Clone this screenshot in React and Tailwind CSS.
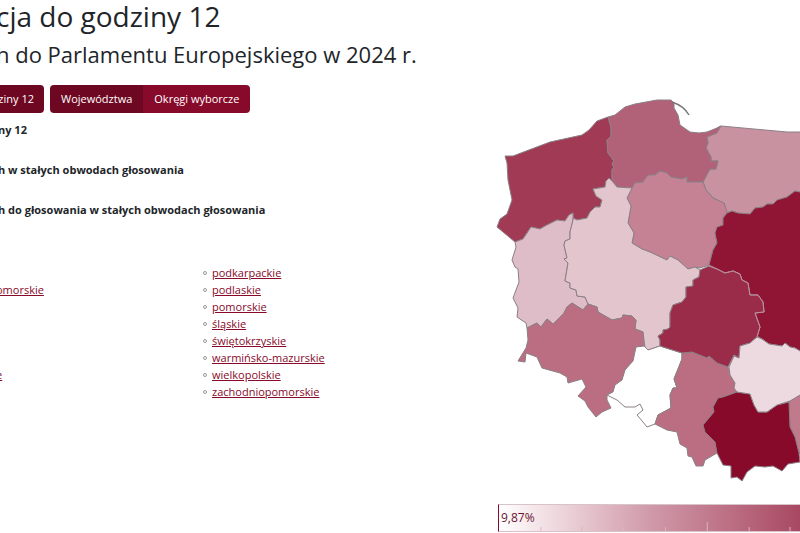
/**
 * @file App.jsx
 * @description Turnout page with the list of voivodeships and the turnout map.
 */

import React, { useState } from "react";

// outlines of the voivodeships, in map units
const REGIONS = [
  {
    name: "zachodniopomorskie",
    fill: "#a03a55",
    points:
      "505,156 513,156 550,142 582,135 589,130 597,121 608,117 611,127 611,136 607,140 608,153 614,161 612,164 614,167 612,170 612,181 609,178 606,181 605,187 593,189 596,196 602,200 600,207 595,207 590,212 587,218 577,220 573,218 573,213 569,215 565,221 557,220 545,226 540,229 531,227 523,239 515,242 497,227 500,219 507,214 512,200 508,180 507,163",
  },
  {
    name: "warmińsko-mazurskie",
    fill: "#c892a1",
    points:
      "721,126 787,132 810,132 810,189 800,192 795,191 787,197 777,200 773,204 767,204 763,207 755,208 750,214 738,213 732,211 727,213 724,203 713,198 706,190 703,182 710,169 716,169 718,161 711,161 711,157 706,148 708,143 707,137 711,134 717,128",
  },
  {
    name: "pomorskie",
    fill: "#b26278",
    points:
      "608,117 615,115 625,107 635,104 657,100 671,100 674,103 674,108 678,115 680,125 690,132 699,133 707,132 717,128 721,126 717,133 707,137 708,143 706,148 711,157 711,161 718,161 716,169 710,169 703,182 687,182 687,177 682,179 671,177 667,173 660,171 655,175 648,175 643,182 635,183 632,188 617,187 612,181 612,170 614,167 612,164 614,161 608,153 607,140 611,136 611,127",
  },
  {
    name: "kujawsko-pomorskie",
    fill: "#c48294",
    points:
      "632,188 635,183 643,182 648,175 655,175 660,171 667,173 671,177 682,179 687,177 687,182 703,182 706,190 713,198 724,203 727,212 723,218 723,225 717,227 715,233 717,243 713,250 709,265 700,268 695,267 688,269 678,260 670,256 667,260 650,252 642,249 632,243 634,233 628,223 631,206 627,198",
  },
  {
    name: "lubuskie",
    fill: "#dfbdc8",
    points:
      "515,242 523,239 531,227 540,229 545,226 557,220 565,221 569,215 573,213 573,220 570,232 570,239 565,241 564,245 567,258 564,259 568,263 565,281 570,283 570,288 576,290 577,296 585,297 588,304 583,310 572,303 567,307 564,313 553,324 547,319 541,327 537,323 527,328 526,323 517,317 518,308 513,298 519,282 518,269 515,267 512,260 516,247",
  },
  {
    name: "wielkopolskie",
    fill: "#e3c5cd",
    points:
      "573,218 577,220 587,218 590,212 595,207 600,207 602,200 596,196 593,189 605,187 606,181 609,178 612,181 617,187 632,188 627,198 631,206 628,223 634,233 632,243 642,249 650,252 667,260 670,256 678,260 688,269 695,267 700,270 699,277 693,280 693,286 686,287 686,297 682,302 673,305 670,313 670,327 668,329 663,330 663,333 658,336 660,340 660,346 648,350 645,348 643,332 635,329 636,320 632,316 623,315 622,318 612,320 598,312 597,307 588,304 585,297 577,296 576,290 570,288 570,283 565,281 568,263 564,259 567,258 564,245 565,241 570,239 570,232 573,220",
  },
  {
    name: "dolnośląskie",
    fill: "#bb6e82",
    points:
      "527,328 537,323 541,327 547,319 553,324 564,313 567,307 572,303 583,310 588,304 597,307 598,312 612,320 622,318 623,315 632,316 636,320 635,329 643,332 644,346 636,347 633,361 625,370 622,380 615,385 613,392 607,395 607,400 611,408 602,412 596,417 588,407 585,401 578,396 586,387 582,379 568,383 567,377 560,373 542,368 537,357 526,353 525,362 518,361 526,348 528,340",
  },
  {
    name: "opolskie",
    fill: "#ffffff",
    points:
      "644,346 648,350 660,346 682,353 682,359 674,379 677,388 673,388 670,395 671,408 658,415 655,424 647,427 643,422 637,415 643,410 640,404 635,407 625,407 617,400 607,395 613,392 615,385 622,380 625,370 633,361 636,347",
  },
  {
    name: "śląskie",
    fill: "#bb6e82",
    points:
      "682,353 692,352 707,358 709,356 717,363 728,367 730,375 735,383 734,388 737,392 723,397 718,398 713,407 714,412 703,425 705,432 715,442 717,453 705,460 703,466 696,466 692,457 688,456 687,448 680,444 677,432 667,430 655,424 658,415 671,408 670,395 673,388 677,388 674,379 682,359",
  },
  {
    name: "mazowieckie",
    fill: "#901534",
    points:
      "709,265 713,250 717,243 715,233 717,227 723,225 723,218 727,213 732,211 738,213 750,214 755,208 763,207 767,204 773,204 777,200 787,197 795,191 800,192 810,189 810,352 800,351 795,348 790,347 785,343 782,346 769,344 762,339 757,336 760,327 755,313 764,312 763,302 758,295 750,295 748,283 742,280 740,274 733,271 725,273 717,269",
  },
  {
    name: "łódzkie",
    fill: "#9a2c4a",
    points:
      "709,266 717,269 725,273 733,271 740,274 742,280 748,283 750,295 758,295 763,302 764,312 755,313 760,327 757,337 750,343 740,346 739,358 734,355 728,367 717,363 709,356 707,358 692,352 682,353 660,346 660,340 658,336 663,333 663,330 668,329 670,327 670,313 673,305 682,302 686,297 686,287 693,286 693,280 699,277 700,270",
  },
  {
    name: "podkarpackie",
    fill: "#bf7a8c",
    points: "789,401 800,395 810,392 810,462 799,453 795,437 790,427",
  },
  {
    name: "małopolskie",
    fill: "#870a2a",
    points:
      "737,392 750,394 754,405 758,412 767,412 777,405 789,402 790,427 795,437 799,453 800,462 788,464 782,471 773,466 765,467 755,466 747,472 742,481 737,477 731,478 731,466 723,465 717,453 715,442 705,432 703,425 714,412 713,407 718,398 723,397",
  },
  {
    name: "świętokrzyskie",
    fill: "#eddae0",
    points:
      "757,337 762,339 769,344 782,346 785,343 790,347 795,348 800,351 810,352 810,392 800,395 790,401 777,405 767,412 758,412 754,405 750,394 737,392 734,388 735,383 730,375 729,367 734,356 739,358 740,346 750,343",
  },
];

const LINKS = [
  "podkarpackie",
  "podlaskie",
  "pomorskie",
  "śląskie",
  "świętokrzyskie",
  "warmińsko-mazurskie",
  "wielkopolskie",
  "zachodniopomorskie",
];

const TICKS = [42, 83, 125, 167, 209, 251, 292];

/** Turnout map, one polygon for each voivodeship */
function TurnoutMap() {
  return (
    <svg viewBox="496 97 304 387" className="block w-full" role="img" aria-label="Mapa frekwencji">
      <g stroke="#8b7f85" strokeWidth="1" strokeLinejoin="round">
        {REGIONS.map((region) => (
          <polygon key={region.name} points={region.points} fill={region.fill} />
        ))}
      </g>
      {/* lighter line between the two darkest regions */}
      <polyline
        points="709,266 717,269 725,273 733,271 740,274 742,280 748,283 750,295 758,295 763,302 764,312 755,313 760,327 757,337"
        fill="none"
        stroke="#c58b9c"
      />
      {/* Hel peninsula */}
      <path d="M672 102 Q684 106 689 115" fill="none" stroke="#777" strokeWidth="1.4" />
    </svg>
  );
}

/** Colour scale under the map */
function Legend() {
  return (
    <div className="relative ml-0.5 mt-5 flex h-7 items-center border-y border-l border-y-[#d9c3ca] border-l-[#870a2a] bg-linear-to-r from-white via-[#d09aaa] to-[#a84863] pl-0.5 text-xs text-[#6b1530]">
      9,87%
      <svg viewBox="0 0 302 26" className="absolute inset-0 h-full w-full" preserveAspectRatio="none" aria-hidden="true">
        {TICKS.map((x) => (
          <line key={x} x1={x} x2={x} y1={x === 209 ? 17 : 22} y2="26" stroke="#dcb3bf" />
        ))}
      </svg>
    </div>
  );
}

function App() {
  const [view, setView] = useState("woj");

  return (
    <div className="bg-white font-['Open_Sans',sans-serif] text-[#212529]">
      {/* --------------------------- Headings --------------------------- */}
      <header className="-ml-1 whitespace-nowrap">
        <h1 className="text-[28px] leading-8">cja do godziny 12</h1>
        <h2 className="pt-1 text-[22px] leading-9">h do Parlamentu Europejskiego w 2024 r.</h2>
      </header>

      <div className="flex items-start pt-3">
        <main className="min-w-0 flex-1 pt-px">
          {/* --------------------------- Buttons --------------------------- */}
          <div className="flex gap-2 text-[11px] whitespace-nowrap text-white">
            <button type="button" className="-ml-2 h-7 w-13 rounded-r bg-[#6e0822] pr-2.5 text-right">
              ziny 12
            </button>
            <div className="-ml-0.5 flex overflow-hidden rounded">
              <button
                type="button"
                onClick={() => setView("woj")}
                className={view === "woj" ? "h-7 bg-[#6e0822] px-[11px]" : "h-7 bg-[#870a2a] px-[11px]"}
              >
                Województwa
              </button>
              <button
                type="button"
                onClick={() => setView("okr")}
                className={view === "okr" ? "h-7 bg-[#6e0822] px-[11px]" : "h-7 bg-[#870a2a] px-[11px]"}
              >
                Okręgi wyborcze
              </button>
            </div>
          </div>

          {/* --------------------------- Turnout labels --------------------------- */}
          <div className="-ml-0.5 flex flex-col gap-6 pt-[9px] text-[11px] leading-4 font-bold whitespace-nowrap">
            <p>ny 12</p>
            <p>h w stałych obwodach głosowania</p>
            <p>h do głosowania w stałych obwodach głosowania</p>
          </div>

          {/* --------------------------- Voivodeships --------------------------- */}
          <div className="flex pt-[46px] text-[11px] leading-[17px] text-[#870a2a]">
            <ul className="w-[203px] pt-[17px]">
              <li>
                <a href="#kujawsko-pomorskie" className="-ml-1 underline">omorskie</a>
              </li>
              <li className="pt-[68px]">
                <a href="#mazowieckie" className="-ml-1 underline">e</a>
              </li>
            </ul>
            <ul>
              {LINKS.map((name) => (
                <li key={name} className="flex items-center gap-[5px]">
                  <span className="size-1 rounded-full border border-[#999]" />
                  <a href={"#" + name} className="underline">{name}</a>
                </li>
              ))}
            </ul>
          </div>
        </main>

        {/* --------------------------- Map --------------------------- */}
        <aside className="w-[38%] pt-[13px]">
          <TurnoutMap />
          <Legend />
        </aside>
      </div>
    </div>
  );
}

export default App;
